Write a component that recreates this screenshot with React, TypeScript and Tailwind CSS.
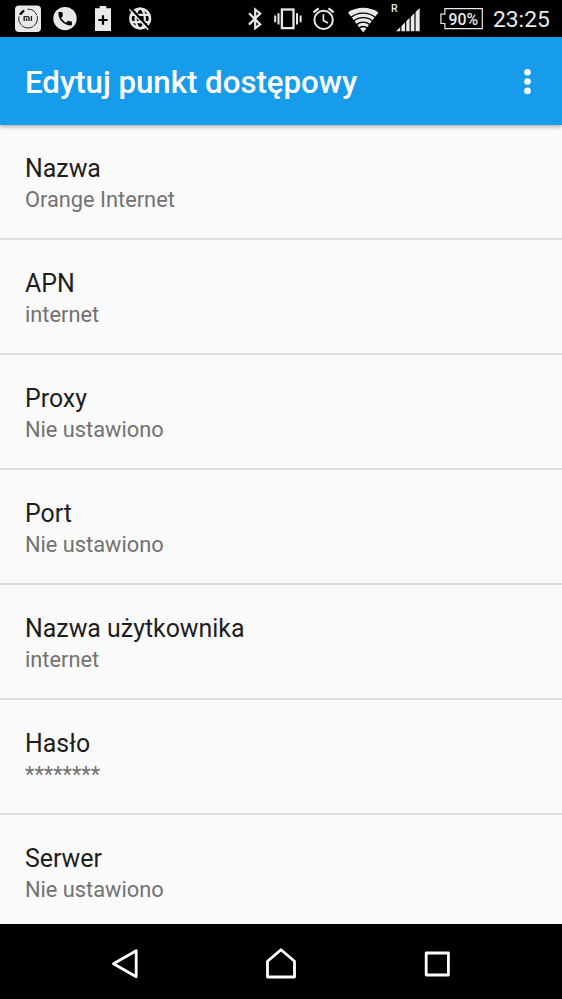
import React from 'react';

interface Preference {
  title: string;
  summary: string;
}

const preferences: Preference[] = [
  { title: 'Nazwa', summary: 'Orange Internet' },
  { title: 'APN', summary: 'internet' },
  { title: 'Proxy', summary: 'Nie ustawiono' },
  { title: 'Port', summary: 'Nie ustawiono' },
  { title: 'Nazwa użytkownika', summary: 'internet' },
  { title: 'Hasło', summary: '********' },
  { title: 'Serwer', summary: 'Nie ustawiono' },
];

const MiIcon = () => (
  <svg className="w-[26px] h-[37px] shrink-0" viewBox="0 0 26 37" fill="none">
    <rect x="0" y="5.5" width="26" height="26.5" rx="4" fill="#e9e9e9" />
    <path d="M12.5 9.2a9.4 9.4 0 1 1-8.6 7.2" stroke="#222" strokeWidth="1" strokeDasharray="11.5 .8" />
    <path d="M5.6 13.8l2.8-2.8" stroke="#000" strokeWidth="2.4" strokeLinecap="round" />
    <path d="M9.2 20.9v-4.3h3.4a1.4 1.4 0 0 1 1.4 1.4v2.9M11.6 18.2v2.7M16.4 16v4.9" stroke="#222" strokeWidth="1.4" />
  </svg>
);

const PhoneIcon = () => (
  <svg className="w-6 h-[37px] shrink-0" viewBox="0 0 24 37">
    <circle cx="12" cy="18.6" r="11.7" fill="#e9e9e9" />
    <path
      transform="translate(3.1 9.7) scale(0.75)"
      d="M6.62 10.79c1.44 2.83 3.76 5.14 6.59 6.59l2.2-2.2c.27-.27.67-.36 1.02-.24 1.12.37 2.33.57 3.57.57.55 0 1 .45 1 1V20c0 .55-.45 1-1 1-9.39 0-17-7.61-17-17 0-.55.45-1 1-1h3.5c.55 0 1 .45 1 1 0 1.25.2 2.45.57 3.57.11.35.03.74-.25 1.02l-2.2 2.2z"
      fill="#000"
    />
  </svg>
);

const BatteryPlusIcon = () => (
  <svg className="w-4 h-[37px] shrink-0" viewBox="0 0 16 37">
    <path d="M4.7 6h6.6v2.3H16V31H0V8.3h4.7z" fill="#e9e9e9" />
    <path d="M8 15.3v9.4M3.4 20h9.2" stroke="#000" strokeWidth="2.2" />
  </svg>
);

const NoNetworkIcon = () => (
  <svg className="w-6 h-[37px] shrink-0" viewBox="0 0 24 37" fill="none" stroke="#e9e9e9">
    <circle cx="12.2" cy="18.5" r="9.8" strokeWidth="2.5" />
    <ellipse cx="12.2" cy="18.5" rx="4.6" ry="9.8" strokeWidth="2.2" />
    <path d="M3 14.9h18.4M3 22.1h18.4" strokeWidth="2.2" />
    <path d="M2.9 8.2l18.6 20.4" stroke="#000" strokeWidth="2.2" />
    <path d="M1.4 9.4l18.8 20.4" strokeWidth="1.4" />
  </svg>
);

const BluetoothIcon = () => (
  <svg className="w-[14px] h-[37px] shrink-0" viewBox="0 0 14 37" fill="none" stroke="#e9e9e9" strokeWidth="2.2">
    <path d="M1 13.2l11.2 11.1L7.2 28.3V9.5l5 4L1 24.6" />
  </svg>
);

const VibrateIcon = () => (
  <svg className="w-7 h-[37px] shrink-0" viewBox="0 0 28 37" fill="none" stroke="#e9e9e9" strokeWidth="2">
    <rect x="7.9" y="9.5" width="11.6" height="18.6" strokeWidth="2.3" />
    <path d="M1.2 15.6v6.6M4.5 13.2v11.4M23 13.2v11.4M26.6 15.6v6.6" />
  </svg>
);

const AlarmIcon = () => (
  <svg className="w-[22px] h-[37px] shrink-0" viewBox="0 0 22 37" fill="none" stroke="#e9e9e9">
    <circle cx="10.6" cy="19.9" r="9.2" strokeWidth="2" />
    <path d="M.5 12.3l5.2-4M20.7 12.3l-5.2-4" strokeWidth="2.2" />
    <path d="M10.4 14.3v6.1l4.6 2.6" strokeWidth="1.7" />
  </svg>
);

const WifiIcon = () => (
  <svg className="w-[31px] h-[37px] shrink-0" viewBox="0 0 31 37" fill="none">
    <path d="M15.2 32.4L0 12.5C9 6.3 21.4 6.3 30.4 12.5z" fill="#e9e9e9" />
    <g stroke="#000" strokeWidth="1.3">
      <circle cx="15.2" cy="32.4" r="19.2" />
      <circle cx="15.2" cy="32.4" r="14.7" />
      <circle cx="15.2" cy="32.4" r="10.2" />
      <circle cx="15.2" cy="32.4" r="5.9" />
    </g>
  </svg>
);

const SignalIcon = () => (
  <div className="relative shrink-0">
    <svg className="w-6 h-[37px]" viewBox="0 0 24 37">
      <path d="M0 31.3L23.7 8v23.3z" fill="#e9e9e9" />
      <path d="M4.8 8v24M9.6 8v24M14.2 8v24M19 8v24" stroke="#000" strokeWidth="1.2" />
    </svg>
    <span className="absolute -left-[5px] top-[3px] text-[10.5px] leading-3 font-medium">R</span>
  </div>
);

const BatteryLevel = () => (
  <div className="relative w-[43px] h-[37px] shrink-0">
    <svg className="w-full h-full" viewBox="0 0 43 37" fill="none">
      <path d="M4.9 8.7h37.4v20H4.9v-5.2H.9v-9.4h4z" stroke="#e9e9e9" strokeWidth="1.2" />
    </svg>
    <span className="absolute top-px left-[8.5px] text-[15.8px] leading-[37px] font-medium">90%</span>
  </div>
);

const StatusBar: React.FC = () => (
  <div className="flex justify-between h-[37px] pl-[15px] pr-[13px] bg-black text-[#e9e9e9] shrink-0">
    <div className="flex">
      <MiIcon />
      <div className="flex ml-3">
        <PhoneIcon />
      </div>
      <div className="flex ml-[18px]">
        <BatteryPlusIcon />
      </div>
      <div className="flex ml-[17px]">
        <NoNetworkIcon />
      </div>
    </div>
    <div className="flex">
      <BluetoothIcon />
      <div className="flex ml-3">
        <VibrateIcon />
      </div>
      <div className="flex ml-[11px]">
        <AlarmIcon />
      </div>
      <div className="flex ml-[13px]">
        <WifiIcon />
      </div>
      <div className="flex ml-[17px]">
        <SignalIcon />
      </div>
      <div className="flex ml-5">
        <BatteryLevel />
      </div>
      <span className="ml-[10px] w-14 text-[22.8px] leading-[39px] whitespace-nowrap">23:25</span>
    </div>
  </div>
);

const Toolbar: React.FC = () => (
  <header className="relative flex items-center justify-between h-[88px] pl-[25px] pr-[31px] bg-[#169ceb] text-white shadow-[0_1px_5px_rgba(0,0,0,0.4)] shrink-0">
    <h1 className="pt-1 text-[31.2px] leading-[40px] font-medium whitespace-nowrap">Edytuj punkt dostępowy</h1>
    <svg className="w-[7px] h-[27px]" viewBox="0 0 7 27" fill="currentColor">
      <circle cx="3.5" cy="4.3" r="3.3" />
      <circle cx="3.5" cy="13.6" r="3.3" />
      <circle cx="3.5" cy="22.9" r="3.3" />
    </svg>
  </header>
);

const NavigationBar: React.FC = () => (
  <nav className="flex items-center justify-between h-[75px] pt-1 pl-[109px] pr-[109px] bg-black shrink-0">
    <svg className="w-8 h-9" viewBox="0 0 32 36" fill="none" stroke="#fff" strokeWidth="2.8" strokeLinejoin="round">
      <path d="M4.5 17.8L27.2 4.8v26z" />
    </svg>
    <svg className="w-8 h-9" viewBox="0 0 32 36" fill="none" stroke="#fff" strokeWidth="2.8" strokeLinejoin="round">
      <path d="M2.5 31V15.3L16 3.8l13.5 11.5V31z" />
    </svg>
    <svg className="w-8 h-9" viewBox="0 0 32 36" fill="none" stroke="#fff" strokeWidth="2.8" strokeLinejoin="round">
      <path d="M5.2 7h22.2v22H5.2z" />
    </svg>
  </nav>
);

export default function App() {
  return (
    <div className="flex flex-col w-[562px] h-[999px] overflow-hidden bg-[#fafafa] font-[Roboto,sans-serif]">
      <StatusBar />
      <Toolbar />
      <main className="flex-1 min-h-0 overflow-hidden">
        {preferences.map((item) => (
          <div key={item.title} className="h-[115px] pt-[27px] pl-[25px] border-b-2 border-[#dedede]">
            <p className="text-[24.9px] leading-[33px] text-[#1e1e1e]">{item.title}</p>
            <p className="text-[21.8px] leading-[30px] text-[#727272]">{item.summary}</p>
          </div>
        ))}
      </main>
      <NavigationBar />
    </div>
  );
}
